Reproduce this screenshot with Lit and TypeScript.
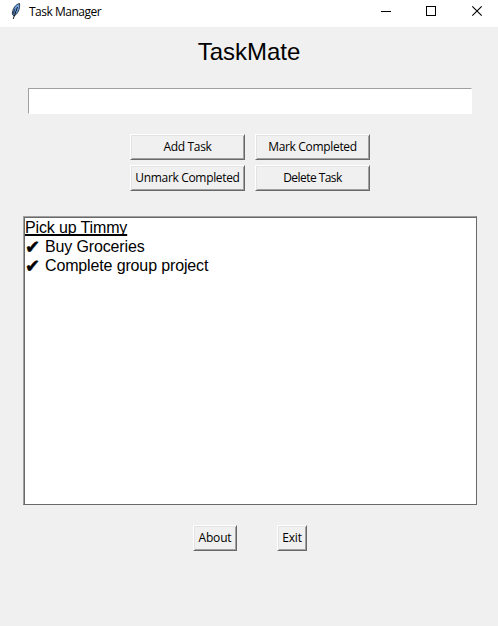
import { LitElement, html, css } from "lit";
import { customElement } from "lit/decorators.js";

@customElement("tk-button")
class TkButton extends LitElement {
  static styles = css`
    :host { display: block; height: 26px; }
    .face {
      box-sizing: border-box; width: 100%; height: 26px; padding: 0;
      display: flex; align-items: center; justify-content: center;
      background: #f0f0f0; color: #000;
      border: 1px solid; border-color: #fff #696969 #696969 #fff;
      box-shadow: inset 1px 1px #e3e3e3, inset -1px -1px #a0a0a0;
      font: 12px/16px "Open Sans", "Noto Sans", sans-serif;
      white-space: nowrap;
    }
    .label { letter-spacing: var(--track, -0.33px); }
  `;
  render() {
    return html`<button class="face"><span class="label"><slot></slot></span></button>`;
  }
}

@customElement("app-root")
class AppRoot extends LitElement {
  static styles = css`
    :host {
      display: flex; flex-direction: column; align-items: center;
      width: 498px; height: 626px; overflow: hidden;
      background: #f0f0f0; color: #000;
      font-family: "Liberation Sans", Arial, sans-serif;
    }
    .titlebar {
      width: 100%; height: 27px; background: #fff; flex: none;
      display: flex; align-items: center;
      font: 12px/16px "Open Sans", "Noto Sans", sans-serif;
    }
    .feather { width: 10px; height: 17px; margin: 0 8px 5px 11px; }
    .caption { flex: 1; letter-spacing: -0.5px; padding-bottom: 3px; }
    .controls { display: flex; height: 27px; }
    .controls svg { width: 46px; height: 27px; display: block; }
    h1 { margin: 11px 0 0; height: 28px; font-size: 24px; line-height: 28px; font-weight: 400; }
    .entry {
      box-sizing: border-box; width: 444px; height: 26px; margin-top: 22px;
      background: #fff; border: 1px solid; border-color: #a0a0a0 #fff #fff #a0a0a0;
      border-radius: 0; outline: none; padding: 0 2px; margin-left: 2px;
    }
    .actions {
      display: grid; grid-template-columns: 115px 115px; gap: 5px 10px;
      margin: 20px 0 0 2px;
    }
    .tight { --track: -0.55px; }
    .list {
      box-sizing: border-box; width: 454px; height: 289px; margin: 25px 0 0 2px;
      background: #fff; border: 1px solid; border-color: #a0a0a0 #696969 #696969 #a0a0a0;
      box-shadow: inset 1px 1px #696969;
      padding: 1px 0 0 1px; list-style: none;
      font-size: 16px; line-height: 19px; letter-spacing: -0.14px;
    }
    .list li { height: 19px; display: flex; align-items: flex-start; }
    .pending { text-decoration: underline; text-decoration-thickness: 2px; text-underline-offset: 1px; text-decoration-skip-ink: none; }
    .mark {
      width: 20px; font-family: "DejaVu Sans", sans-serif; font-size: 18px;
      -webkit-text-stroke: 0.5px #000;
    }
    .footer { display: flex; gap: 40px; margin: 20px 0 0 2px; }
    .about { width: 44px; --track: -0.2px; }
    .exit { width: 30px; --track: -0.2px; }
  `;

  tasks = [
    { name: "Pick up Timmy", done: false },
    { name: "Buy Groceries", done: true },
    { name: "Complete group project", done: true },
  ];

  render() {
    return html`
      <header class="titlebar">
        <svg class="feather" viewBox="0 0 10 17">
          <path d="M8.500 0.500C4.500 1.500 1.500 5.500 1.300 11L2.800 13C6.500 11.500 9.300 6 8.500 0.500Z" fill="#6da5e4" stroke="#20262e" stroke-width="0.900"/>
          <path d="M4.500 4.500C2.500 7 1.500 9.500 1.600 11.500L3.300 11Z" fill="#2c4a70"/>
          <path d="M6.500 4L2.200 16" stroke="#15181d" stroke-width="1" fill="none"/>
        </svg>
        <span class="caption">Task Manager</span>
        <div class="controls">
          <svg viewBox="0 0 46 27" shape-rendering="crispEdges"><path d="M21 11.500h10" stroke="#000"/></svg>
          <svg viewBox="0 0 46 27" shape-rendering="crispEdges"><rect x="20.500" y="6.500" width="9" height="9" fill="none" stroke="#000"/></svg>
          <svg viewBox="0 0 46 27"><path d="M20.300 6.300l9.400 9.400M29.700 6.300l-9.400 9.400" stroke="#000" stroke-width="1.1"/></svg>
        </div>
      </header>
      <h1>TaskMate</h1>
      <input class="entry" aria-label="Task" />
      <div class="actions">
        <tk-button>Add Task</tk-button>
        <tk-button>Mark Completed</tk-button>
        <tk-button>Unmark Completed</tk-button>
        <tk-button class="tight">Delete Task</tk-button>
      </div>
      <ul class="list">
        ${this.tasks.map((t) => html`<li>
          ${t.done ? html`<span class="mark">✔</span><span>${t.name}</span>` : html`<span class="pending">${t.name}</span>`}
        </li>`)}
      </ul>
      <div class="footer">
        <tk-button class="about">About</tk-button>
        <tk-button class="exit">Exit</tk-button>
      </div>
    `;
  }
}
